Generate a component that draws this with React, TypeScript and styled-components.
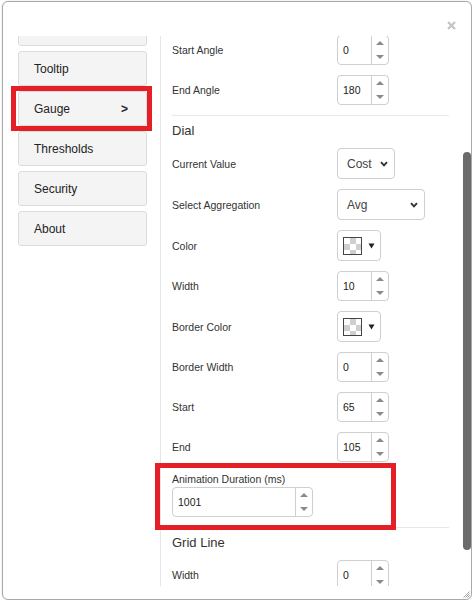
import React, { useCallback, useLayoutEffect, useRef, useState } from "react";
import styled, { createGlobalStyle, css } from "styled-components";

const GlobalStyle = createGlobalStyle`
  html, body { margin: 0; padding: 0; background: #fff; }
  body { font-family: "Liberation Sans", Arial, sans-serif; color: #333; }
  *, *::before, *::after { box-sizing: border-box; }
`;

const RED = "#e51f26";

const Dialog = styled.div`
  margin: 1px 0 0 2px;
  width: 470px;
  height: 599px;
  border: 1px solid #a9a9a9;
  border-radius: 6px;
  background: #fff;
  display: flex;
  flex-direction: column;
  overflow: hidden;
  box-shadow: 0 0 2px rgba(0, 0, 0, 0.15);
`;

const Header = styled.div`
  flex: none;
  height: 34px;
  display: flex;
  justify-content: flex-end;
  align-items: flex-start;
  padding: 19px 15px 0 0;
`;

const CloseButton = styled.button`
  border: 0;
  background: none;
  padding: 0;
  width: 9px;
  height: 9px;
  color: #c4c4c4;
  cursor: pointer;
  svg { display: block; }
`;

const ScrollFrame = styled.div`
  flex: 1;
  min-height: 0;
  display: flex;
`;

const ScrollArea = styled.div`
  flex: 1;
  min-width: 0;
  overflow-y: auto;
  overflow-x: hidden;
  scrollbar-width: none;
  &::-webkit-scrollbar { display: none; }
`;

const ScrollTrack = styled.div`
  flex: none;
  width: 8px;
  position: relative;
`;

const ScrollThumb = styled.div`
  position: absolute;
  left: 0;
  right: 0;
  background: #6b6b6b;
  border-radius: 4px;
`;

const Columns = styled.div`
  display: flex;
  min-height: 100%;
`;

const Sidebar = styled.nav`
  flex: none;
  width: 157px;
  padding: 15px 13px 0 15px;
  display: flex;
  flex-direction: column;
  gap: 5px;
`;

const NavItem = styled.div<{ $flagged?: boolean }>`
  position: relative;
  flex: none;
  height: 35px;
  display: flex;
  align-items: center;
  justify-content: space-between;
  padding: 0 18px 0 15px;
  background: #f4f4f4;
  border: 1px solid #dcdcdc;
  border-radius: 3px;
  font-size: 12px;
  color: #222;
  cursor: pointer;
  ${(p) =>
    p.$flagged &&
    css`
      &::after {
        content: "";
        position: absolute;
        left: -8px;
        right: -6px;
        top: -6px;
        bottom: -6px;
        border: 5px solid ${RED};
        pointer-events: none;
      }
    `}
`;

const NavArrow = styled.span`
  font-weight: bold;
  font-size: 12px;
`;

const Panel = styled.div`
  flex: 1;
  min-width: 0;
  border-left: 1px solid #e6e6e6;
  padding: 14px 14px 0 11px;
`;

const Section = styled.section<{ $divided?: boolean }>`
  padding-bottom: 10px;
  &:last-child { padding-bottom: 5px; }
  ${(p) =>
    p.$divided &&
    css`
      border-top: 1px solid #e8e8e8;
      padding-top: 7px;
    `}
`;

const SectionTitle = styled.h3`
  margin: 0 0 9px;
  font-size: 13px;
  line-height: 16px;
  font-weight: normal;
  color: #333;
`;

const Rows = styled.div`
  display: flex;
  flex-direction: column;
  gap: 10px;
`;

const Row = styled.div`
  display: flex;
  align-items: center;
`;

const Label = styled.label`
  flex: none;
  width: 165px;
  font-size: 10.5px;
  color: #333;
`;

const StackedField = styled.div<{ $flagged?: boolean }>`
  position: relative;
  display: flex;
  flex-direction: column;
  gap: 1px;
  ${(p) =>
    p.$flagged &&
    css`
      &::after {
        content: "";
        position: absolute;
        left: -17px;
        top: -9px;
        width: 241px;
        bottom: -13px;
        border: 5px solid ${RED};
        pointer-events: none;
      }
    `}
`;

const StackedLabel = styled.label`
  font-size: 10.5px;
  line-height: 14px;
  color: #333;
`;

const NumberBox = styled.div<{ $w: number }>`
  display: flex;
  width: ${(p) => p.$w}px;
  height: 30px;
  border: 1px solid #cfcfcf;
  border-radius: 4px;
  background: #fff;
  overflow: hidden;
`;

const NumberText = styled.input`
  flex: 1;
  min-width: 0;
  border: 0;
  outline: none;
  padding: 0 0 0 5px;
  background: transparent;
  font: 10.5px "Liberation Sans", Arial, sans-serif;
  color: #222;
`;

const Spinner = styled.div`
  flex: none;
  width: 17px;
  border-left: 1px solid #cfcfcf;
  display: flex;
  flex-direction: column;
`;

const SpinButton = styled.span<{ $dir: "up" | "down" }>`
  flex: 1;
  display: flex;
  align-items: center;
  justify-content: center;
  &::before {
    content: "";
    border-left: 4px solid transparent;
    border-right: 4px solid transparent;
    ${(p) =>
      p.$dir === "up"
        ? "border-bottom: 4px solid #8a8a8a;"
        : "border-top: 4px solid #8a8a8a;"}
  }
`;

const SelectBox = styled.div<{ $w: number }>`
  display: flex;
  align-items: center;
  justify-content: space-between;
  width: ${(p) => p.$w}px;
  height: 31px;
  padding: 0 6px 0 9px;
  border: 1px solid #cfcfcf;
  border-radius: 4px;
  background: #fff;
  font-size: 12px;
  color: #444;
  cursor: pointer;
  svg { display: block; }
`;

const ColorButton = styled.div`
  display: flex;
  align-items: center;
  gap: 6px;
  width: 44px;
  height: 31px;
  padding-left: 5px;
  border: 1px solid #cfcfcf;
  border-radius: 4px;
  background: #fff;
  cursor: pointer;
  svg { display: block; }
`;

const Swatch = styled.span`
  flex: none;
  width: 19px;
  height: 18px;
  border: 1px solid #444;
  background: conic-gradient(#cfcfcf 25%, #fff 0 50%, #cfcfcf 0 75%, #fff 0) 0 0 / 12px 12px;
`;

const Footer = styled.div`
  flex: none;
  height: 13px;
  display: flex;
  justify-content: flex-end;
  align-items: flex-end;
  padding: 0 1px 1px 0;
  color: #8a8a8a;
  svg { display: block; }
`;

function NumberInput({ value, width = 52 }: { value: string; width?: number }) {
  return (
    <NumberBox $w={width}>
      <NumberText type="text" defaultValue={value} />
      <Spinner>
        <SpinButton $dir="up" />
        <SpinButton $dir="down" />
      </Spinner>
    </NumberBox>
  );
}

function Select({ value, width }: { value: string; width: number }) {
  return (
    <SelectBox $w={width}>
      <span>{value}</span>
      <svg width="8" height="6" viewBox="0 0 8 6">
        <path d="M1 1.2 L4 4.4 L7 1.2" fill="none" stroke="#333" strokeWidth="1.9" />
      </svg>
    </SelectBox>
  );
}

function ColorPicker() {
  return (
    <ColorButton>
      <Swatch />
      <svg width="7" height="6" viewBox="0 0 7 6">
        <path d="M0.5 0.5 H6.5 L3.5 5.5 Z" fill="#222" />
      </svg>
    </ColorButton>
  );
}

type Field =
  | { label: string; kind: "number"; value: string }
  | { label: string; kind: "select"; value: string; width: number }
  | { label: string; kind: "color" };

function FieldRow({ f }: { f: Field }) {
  return (
    <Row>
      <Label>{f.label}</Label>
      {f.kind === "number" && <NumberInput value={f.value} />}
      {f.kind === "select" && <Select value={f.value} width={f.width} />}
      {f.kind === "color" && <ColorPicker />}
    </Row>
  );
}

const navItems = ["General", "Data", "Title", "Legend", "Tooltip", "Gauge", "Thresholds", "Security", "About"];

const rangeFields: Field[] = [
  { label: "Min", kind: "number", value: "0" },
  { label: "Max", kind: "number", value: "100" },
  { label: "Radius", kind: "number", value: "90" },
  { label: "Start Angle", kind: "number", value: "0" },
  { label: "End Angle", kind: "number", value: "180" },
];

const dialFields: Field[] = [
  { label: "Current Value", kind: "select", value: "Cost", width: 58 },
  { label: "Select Aggregation", kind: "select", value: "Avg", width: 88 },
  { label: "Color", kind: "color" },
  { label: "Width", kind: "number", value: "10" },
  { label: "Border Color", kind: "color" },
  { label: "Border Width", kind: "number", value: "0" },
  { label: "Start", kind: "number", value: "65" },
  { label: "End", kind: "number", value: "105" },
];

const gridFields: Field[] = [
  { label: "Width", kind: "number", value: "0" },
  { label: "Color", kind: "color" },
];

export default function App() {
  const scrollRef = useRef<HTMLDivElement>(null);
  const [thumb, setThumb] = useState({ top: 0, height: 0 });

  const measure = useCallback(() => {
    const el = scrollRef.current;
    if (!el) return;
    const ratio = el.clientHeight / el.scrollHeight;
    setThumb({ top: el.scrollTop * ratio, height: el.clientHeight * ratio });
  }, []);

  useLayoutEffect(() => {
    if (scrollRef.current) scrollRef.current.scrollTop = 160;
    measure();
  }, [measure]);

  return (
    <>
      <GlobalStyle />
      <Dialog>
        <Header>
          <CloseButton aria-label="Close">
            <svg width="9" height="9" viewBox="0 0 9 9">
              <path d="M1 1 L8 8 M8 1 L1 8" stroke="currentColor" strokeWidth="2.2" />
            </svg>
          </CloseButton>
        </Header>
        <ScrollFrame>
          <ScrollArea ref={scrollRef} onScroll={measure}>
            <Columns>
              <Sidebar>
                {navItems.map((n) => (
                  <NavItem key={n} $flagged={n === "Gauge"}>
                    <span>{n}</span>
                    {n === "Gauge" && <NavArrow>&gt;</NavArrow>}
                  </NavItem>
                ))}
              </Sidebar>
              <Panel>
                <Section>
                  <SectionTitle>Range</SectionTitle>
                  <Rows>
                    {rangeFields.map((f) => (
                      <FieldRow key={f.label} f={f} />
                    ))}
                  </Rows>
                </Section>
                <Section $divided>
                  <SectionTitle>Dial</SectionTitle>
                  <Rows>
                    {dialFields.map((f) => (
                      <FieldRow key={f.label} f={f} />
                    ))}
                    <StackedField $flagged>
                      <StackedLabel>Animation Duration (ms)</StackedLabel>
                      <NumberInput value="1001" width={141} />
                    </StackedField>
                  </Rows>
                </Section>
                <Section $divided>
                  <SectionTitle>Grid Line</SectionTitle>
                  <Rows>
                    {gridFields.map((f) => (
                      <FieldRow key={f.label} f={f} />
                    ))}
                  </Rows>
                </Section>
              </Panel>
            </Columns>
          </ScrollArea>
          <ScrollTrack>
            <ScrollThumb style={{ top: thumb.top, height: thumb.height }} />
          </ScrollTrack>
        </ScrollFrame>
        <Footer>
          <svg width="7" height="7" viewBox="0 0 7 7">
            <path d="M6.5 0.5 L0.5 6.5 M6.5 2.5 L2.5 6.5 M6.5 4.5 L4.5 6.5" stroke="currentColor" strokeWidth="0.8" />
          </svg>
        </Footer>
      </Dialog>
    </>
  );
}
